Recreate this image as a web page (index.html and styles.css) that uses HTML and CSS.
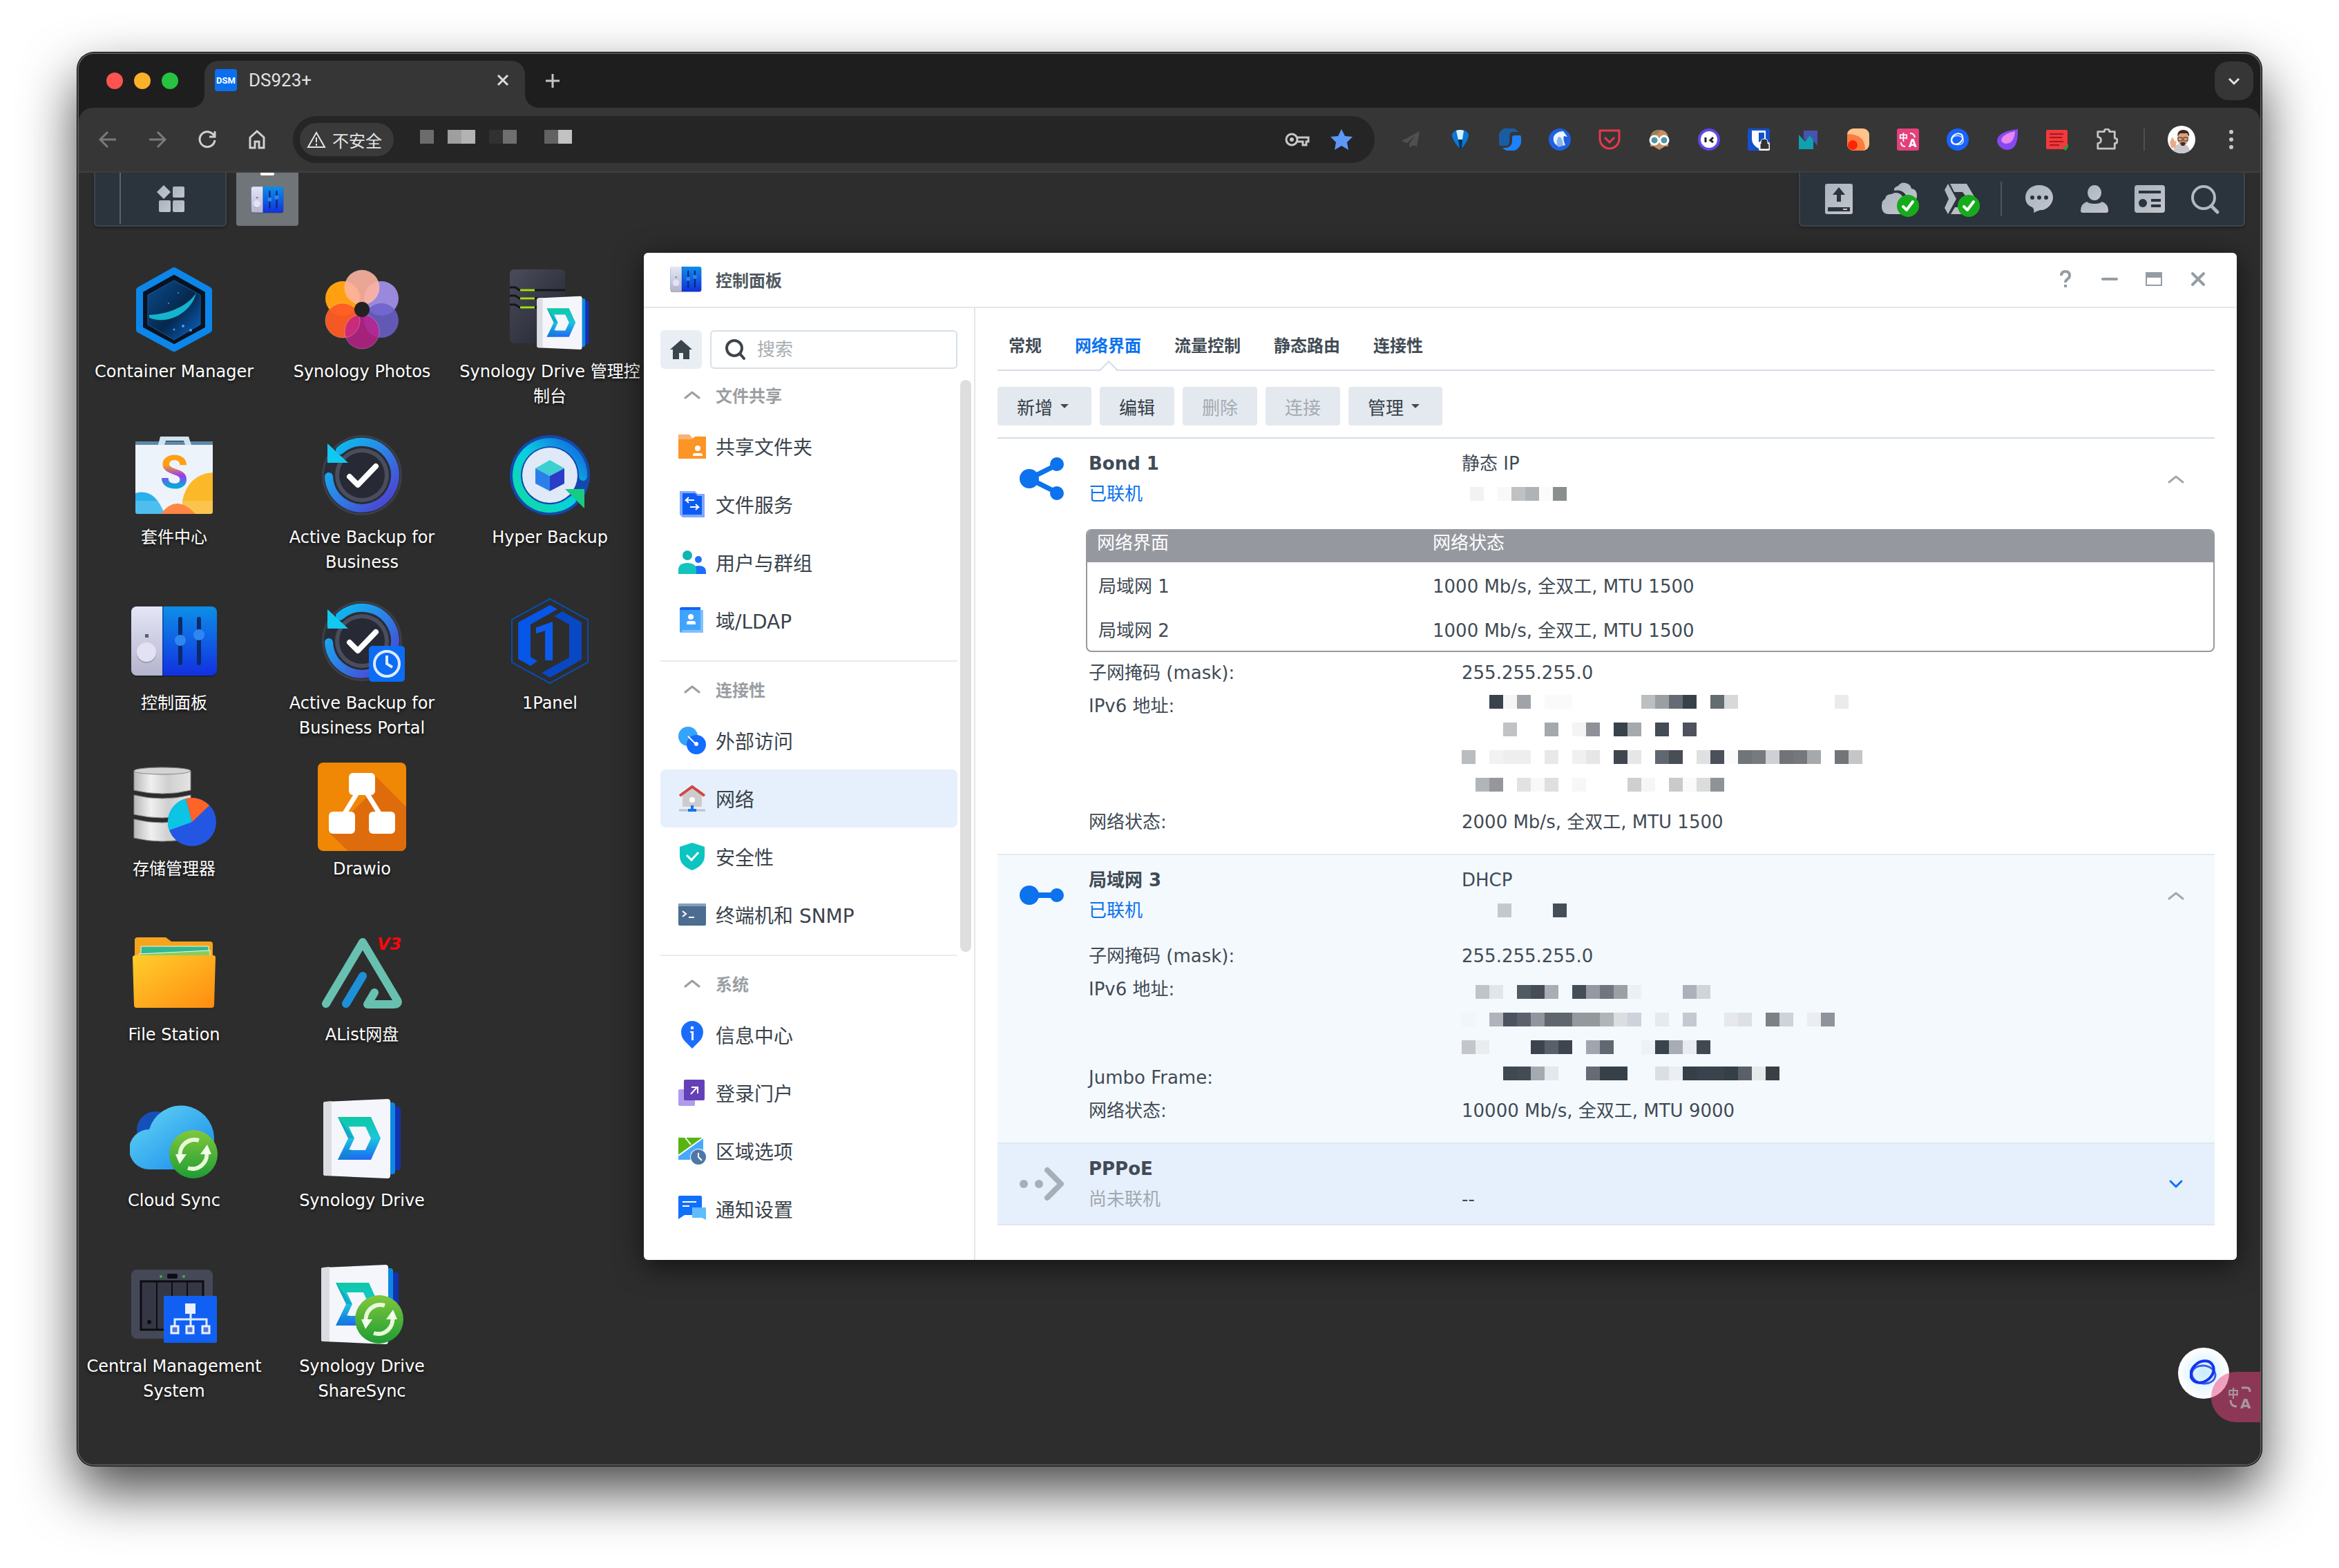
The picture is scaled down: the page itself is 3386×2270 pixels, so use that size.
FILE: index.html
```html
<!DOCTYPE html>
<html lang="zh-CN">
<head>
    <meta charset="UTF-8">
    <meta name="viewport" content="width=device-width, initial-scale=1.0">
    <title>DS923+</title>
    <link rel="stylesheet" href="styles.css">
</head>
<body>
    <!-- Shared gradients and icons -->
    <svg class="defs" aria-hidden="true">
        <defs>
            <linearGradient id="gBlue" x1="0" y1="0" x2="0" y2="1"><stop offset="0" stop-color="#0c8fe8"/><stop offset="1" stop-color="#1230e0"/></linearGradient>
            <linearGradient id="gSilver" x1="0" y1="0" x2="0" y2="1"><stop offset="0" stop-color="#e6e6f8"/><stop offset="1" stop-color="#b4b4cc"/></linearGradient>
            <linearGradient id="gRing" x1="0" y1="0" x2="1" y2="1"><stop offset="0" stop-color="#06c6ee"/><stop offset=".45" stop-color="#2a86e8"/><stop offset="1" stop-color="#5138cc"/></linearGradient>
            <linearGradient id="gRing2" x1="0" y1="1" x2="1" y2="0"><stop offset="0" stop-color="#10dca0"/><stop offset=".5" stop-color="#08cfe0"/><stop offset="1" stop-color="#1260e0"/></linearGradient>
            <linearGradient id="gDrive" x1="0" y1="0" x2="0" y2="1"><stop offset="0" stop-color="#0cc9a4"/><stop offset=".5" stop-color="#1cc4dc"/><stop offset="1" stop-color="#1c68f4"/></linearGradient>
            <linearGradient id="gDark" x1="0" y1="0" x2="1" y2="1"><stop offset="0" stop-color="#4a4c5c"/><stop offset="1" stop-color="#22242e"/></linearGradient>
            <linearGradient id="gMetal" x1="0" y1="0" x2="1" y2="0"><stop offset="0" stop-color="#b8b8b8"/><stop offset=".3" stop-color="#f0f0f0"/><stop offset=".6" stop-color="#cfcfcf"/><stop offset="1" stop-color="#e4e4e4"/></linearGradient>
            <linearGradient id="gFolder" x1="0" y1="0" x2="1" y2="1"><stop offset="0" stop-color="#ffce2c"/><stop offset="1" stop-color="#ff8c10"/></linearGradient>
            <linearGradient id="gCloud" x1="0" y1="0" x2="1" y2="1"><stop offset="0" stop-color="#66d8f4"/><stop offset="1" stop-color="#1488ec"/></linearGradient>
            <linearGradient id="gGreen" x1="0" y1="0" x2="0" y2="1"><stop offset="0" stop-color="#80c83c"/><stop offset="1" stop-color="#1e9c34"/></linearGradient>
            <linearGradient id="gS" x1="0" y1="0" x2="0" y2="1"><stop offset=".35" stop-color="#ffa010"/><stop offset=".55" stop-color="#9a3cf0"/><stop offset=".75" stop-color="#08a8d8"/></linearGradient>
            <linearGradient id="gPlanet" x1="0" y1="0" x2="1" y2="1"><stop offset="0" stop-color="#0a4c90"/><stop offset=".55" stop-color="#06284c"/><stop offset="1" stop-color="#0a68d0"/></linearGradient>
            <linearGradient id="gGrey" x1="0" y1="0" x2="1" y2="1"><stop offset="0" stop-color="#a9b3c0"/><stop offset="1" stop-color="#c3c5ca"/></linearGradient>
        </defs>

        <symbol id="i-panel" viewBox="0 0 128 128">
            <rect x="2" y="16" width="124" height="100" rx="8" fill="#16181c" opacity=".5"/>
            <rect x="2" y="14" width="124" height="100" rx="8" fill="url(#gBlue)"/>
            <path d="M10 14h37v100H10a8 8 0 0 1-8-8V22a8 8 0 0 1 8-8z" fill="url(#gSilver)"/>
            <path d="M48 14v100" stroke="#10308c" stroke-width="1"/>
            <circle cx="24" cy="82" r="14" fill="#9c9cb4"/><circle cx="24" cy="80" r="14" fill="#e2e2f4"/>
            <rect x="22" y="54" width="5" height="5" fill="#5c5c6c"/>
            <path d="M73 32v64M100 32v64" stroke="#0a2a6c" stroke-width="6" stroke-linecap="round"/>
            <circle cx="73" cy="63" r="8" fill="#2f86f0"/><circle cx="100" cy="55" r="8" fill="#2f86f0"/>
        </symbol>

        <symbol id="i-container" viewBox="0 0 128 128">
            <path d="M64 8l50 28v57L64 120 14 93V36z" fill="#0a1220" stroke="#0c86e8" stroke-width="10" stroke-linejoin="round"/>
            <path d="M64 22l38 21v43L64 108 26 86V43z" fill="url(#gPlanet)" stroke="#1a5a9c" stroke-width="1"/>
            <path d="M28 76C58 88 90 66 96 40c-10 16-34 30-68 32z" fill="#14b4cc"/>
            <g fill="#3aa4ff"><circle cx="77" cy="88" r="2"/><circle cx="64" cy="93" r="1.5"/><circle cx="88" cy="94" r="2"/><circle cx="56" cy="55" r="1"/><circle cx="70" cy="40" r="1"/></g>
        </symbol>

        <symbol id="i-photos" viewBox="0 0 128 128">
            <circle cx="36" cy="48" r="25" fill="#ffa010"/><circle cx="36" cy="80" r="25" fill="#ff5c24" opacity=".95"/>
            <circle cx="92" cy="48" r="25" fill="#9a88dc"/><circle cx="92" cy="80" r="25" fill="#6c62cc" opacity=".85"/>
            <circle cx="64" cy="96" r="25" fill="#c0208c" opacity=".82"/><circle cx="64" cy="32" r="25" fill="#ffb4a0" opacity=".9"/>
            <g fill="none" stroke="#fff" stroke-opacity=".25"><circle cx="36" cy="80" r="25"/><circle cx="64" cy="32" r="25"/><circle cx="64" cy="96" r="25"/></g>
            <circle cx="64" cy="64" r="11" fill="#222"/>
        </symbol>

        <symbol id="i-book" viewBox="0 0 128 128">
            <path d="M90 18h26a4 4 0 0 1 4 4v84a4 4 0 0 1-4 4H90z" fill="#1232b0"/>
            <path d="M90 12h18a4 4 0 0 1 4 4v96a4 4 0 0 1-4 4H90z" fill="#0c88e4"/>
            <path d="M11 11l90-4q4 0 4 4v107q0 4-4 4l-90-4q-3 0-3-3V14q0-3 3-3z" fill="#f5f6fb"/>
            <path d="M11 11l9-1v108l-9-0q-3 0-3-3V14q0-3 3-3z" fill="#dcdde2"/>
            <path d="M29 33h48l14 31-14 31H29l15-31zM45 47l8 17-8 17h24l8-17-8-17z" fill="url(#gDrive)" fill-rule="evenodd"/>
            <path d="M29 33l24 31-9 0zM29 95l10-15h10l-4 15z" fill="#0a8cc0" opacity=".45"/>
        </symbol>

        <symbol id="i-sync" viewBox="0 0 72 72">
            <circle cx="36" cy="36" r="35" fill="url(#gGreen)"/>
            <path d="M28 56a21 21 0 0 0 27-24M44 16a21 21 0 0 0-27 24" fill="none" stroke="#e8f8d8" stroke-width="6"/>
            <path d="M62 36H46l10-14zM10 36h16L16 50z" fill="#f4fdec"/>
        </symbol>

        <symbol id="i-drive-admin" viewBox="0 0 128 128">
            <rect x="6" y="6" width="80" height="107" rx="6" fill="url(#gDark)"/>
            <path d="M6 32h8l6 4h66M6 44h8l6 4h66M6 57h8l6 4h66" stroke="#14161c" stroke-width="3" fill="none"/>
            <path d="M21 36h21M21 48h21M21 61h21" stroke="#a4e014" stroke-width="3"/>
            <use href="#i-book" x="40" y="40" width="86" height="86"/>
        </symbol>

        <symbol id="i-package" viewBox="0 0 128 128">
            <path d="M8 15h112v10H8z" fill="#5c88a8"/>
            <path d="M41 20l3-12h41l4 12h-9l-2-6H52l-2 6z" fill="#d0e4f0"/>
            <path d="M8 20h112v96a4 4 0 0 1-4 4H12a4 4 0 0 1-4-4z" fill="#edf3fa"/>
            <path d="M8 90q28-8 42 30H12a4 4 0 0 1-4-4z" fill="#28b0ec"/>
            <path d="M76 101q8-38 44-41v56a4 4 0 0 1-4 4H76z" fill="#fbb828"/>
            <path d="M45 120q22-30 50 0z" fill="#ff6c1c"/>
            <path d="M8 101h112v15a4 4 0 0 1-4 4H12a4 4 0 0 1-4-4z" fill="#fff" opacity=".18"/>
        </symbol>

        <symbol id="i-abb" viewBox="0 0 128 128">
            <circle cx="64" cy="64" r="58" fill="#3c3f4a"/><circle cx="64" cy="64" r="55" fill="#292b36"/>
            <circle cx="64" cy="64" r="39" fill="#4a4d5c"/><circle cx="64" cy="64" r="33" fill="#272934"/>
            <path d="M16 66a48 48 0 1 0 16-38" fill="none" stroke="url(#gRing)" stroke-width="12" stroke-linecap="round"/>
            <path d="M14 18l30 28H14z" fill="#12c8f0"/>
            <path d="M46 66l12 12 26-27" fill="none" stroke="#fff" stroke-width="8" stroke-linecap="round" stroke-linejoin="round"/>
        </symbol>

        <symbol id="i-abb-portal" viewBox="0 0 128 128">
            <use href="#i-abb" width="128" height="128"/>
            <rect x="74" y="71" width="52" height="52" rx="5" fill="#0c6cf4"/>
            <circle cx="100" cy="97" r="18" fill="none" stroke="#dcebff" stroke-width="4"/>
            <path d="M100 85v12l8 5" fill="none" stroke="#dcebff" stroke-width="4"/>
        </symbol>

        <symbol id="i-hyper" viewBox="0 0 128 128">
            <circle cx="64" cy="64" r="58" fill="#1448ac"/>
            <circle cx="64" cy="64" r="40" fill="#dfe9f8"/>
            <path d="M96 100A48 48 0 1 1 112 66" fill="none" stroke="url(#gRing2)" stroke-width="12" stroke-linecap="round"/>
            <path d="M114 84v28L86 84z" fill="#16cc84"/>
            <path d="M64 42l21 12-21 11-21-11z" fill="#3cd0d0"/><path d="M43 54l21 11v22L43 76z" fill="#2a80e8"/><path d="M85 54L64 65v22l21-11z" fill="#2a3cc8"/>
        </symbol>

        <symbol id="i-onepanel" viewBox="0 0 128 128">
            <path d="M64 3l55 30v62l-55 30L9 95V33z" fill="none" stroke="#0a4cb0" stroke-width="2"/>
            <path d="M64 12l11 6-39 22v47l10 6-10 7-18-10V37z" fill="#0656e8"/>
            <path d="M82 21l28 16v54l-46 26-12-7 40-22V40L70 28z" fill="#0848c4"/>
        </symbol>

        <symbol id="i-storage" viewBox="0 0 128 128">
            <g stroke="#8a8a8a" stroke-width="1" fill="url(#gMetal)">
                <path d="M6 82q41 10 82 0v27q-41 10-82 0z"/><path d="M6 47q41 10 82 0v28q-41 10-82 0z"/><path d="M6 12q41 10 82 0v28q-41 10-82 0z"/>
                <ellipse cx="47" cy="12" rx="41" ry="5" fill="#d4d4d4"/>
            </g>
            <circle cx="90" cy="86" r="35" fill="#2456e4"/>
            <path d="M90 86L57 98A35 35 0 0 1 81 52z" fill="#0cc4e4"/><path d="M90 86L81 52a35 35 0 0 1 34 10z" fill="#ff6426"/>
        </symbol>

        <symbol id="i-drawio" viewBox="0 0 128 128">
            <rect width="128" height="128" rx="8" fill="#f08705"/>
            <path d="M82 18l46 46v56a8 8 0 0 1-8 8H44L18 103l60-60z" fill="#df6c0c"/>
            <path d="M57 44L36 78M71 44l21 34" stroke="#fff" stroke-width="7"/>
            <g fill="#fff"><rect x="45" y="15" width="38" height="32" rx="6"/><rect x="16" y="71" width="38" height="32" rx="6"/><rect x="74" y="71" width="38" height="32" rx="6"/></g>
        </symbol>

        <symbol id="i-files" viewBox="0 0 128 128">
            <path d="M7 17a4 4 0 0 1 4-4h41l8 6h56a4 4 0 0 1 4 4v30H7z" fill="#f6a41c"/>
            <path d="M16 26h98v20H16z" fill="#34b890" stroke="#e8fbe8" stroke-width="1"/><path d="M13 37l103-5v16H13z" fill="#88cc60" stroke="#e8fbe8" stroke-width="1"/>
            <path d="M4 42q0-3 4-3h112q4 0 4 3l-2 69q0 4-4 4H10q-4 0-4-4z" fill="url(#gFolder)"/>
        </symbol>

        <symbol id="i-alist" viewBox="0 0 128 128">
            <path d="M12 109L65 20l50 84q3 6-6 6H72l10-17" fill="none" stroke="#68c0b0" stroke-width="12" stroke-linecap="round" stroke-linejoin="round"/>
            <path d="M41 109l24-40" stroke="#1c90d8" stroke-width="12" stroke-linecap="round"/>
        </symbol>

        <symbol id="i-cloud" viewBox="0 0 128 128">
            <circle cx="37" cy="52" r="27" fill="#1450b8"/>
            <path d="M28 109a29 29 0 0 1 0-58A48 48 0 0 1 122 62q0 47-40 47z" fill="url(#gCloud)"/>
            <use href="#i-sync" x="56" y="51" width="72" height="72"/>
        </symbol>

        <symbol id="i-cms" viewBox="0 0 128 128">
            <rect x="2" y="14" width="118" height="100" rx="8" fill="#454856"/>
            <rect x="16" y="31" width="90" height="70" fill="#353844" stroke="#0c0d12" stroke-width="3"/>
            <path d="M39 31v70M61 31v70M83 31v70" stroke="#0c0d12" stroke-width="2"/>
            <rect x="54" y="20" width="15" height="7" rx="2" fill="#0c0d12"/><circle cx="45" cy="24" r="2" fill="#38b838"/><circle cx="78" cy="24" r="2" fill="#38b838"/><circle cx="28" cy="90" r="3" fill="#0c0d12"/>
            <rect x="49" y="52" width="77" height="68" rx="2" fill="#1060f4"/>
            <path d="M88 78v18M65 96V86h46v10" fill="none" stroke="#dcebff" stroke-width="3"/>
            <rect x="80" y="63" width="15" height="15" fill="#e8f2ff"/>
            <g fill="#5c74d8" stroke="#e8f2ff" stroke-width="3"><rect x="60" y="96" width="10" height="10"/><rect x="82" y="96" width="10" height="10"/><rect x="105" y="96" width="10" height="10"/></g>
        </symbol>

        <symbol id="i-sharesync" viewBox="0 0 128 128">
            <use href="#i-book" x="-3" width="128" height="128"/>
            <use href="#i-sync" x="53" y="50" width="72" height="72"/>
        </symbol>

        <symbol id="i-up" viewBox="0 0 24 24"><path d="M2 17l10-8 10 8" fill="none" stroke="currentColor" stroke-width="3" stroke-linecap="round" stroke-linejoin="round"/></symbol>
        <symbol id="i-down" viewBox="0 0 24 24"><path d="M4 8l8 8 8-8" fill="none" stroke="currentColor" stroke-width="3" stroke-linecap="round" stroke-linejoin="round"/></symbol>
        <symbol id="i-okay" viewBox="0 0 32 32"><circle cx="16" cy="16" r="16" fill="#17ab1c"/><path d="M9 17l5 5 9-12" fill="none" stroke="#fff" stroke-width="4" stroke-linecap="round" stroke-linejoin="round"/></symbol>
        <symbol id="i-orbit" viewBox="0 0 40 40"><ellipse cx="20" cy="22" rx="17" ry="13" fill="none" stroke="currentColor" stroke-width="3" opacity=".8" transform="rotate(8 20 22)"/><ellipse cx="18" cy="18" rx="18" ry="14" transform="rotate(-38 18 18)" fill="none" stroke="currentColor" stroke-width="4"/></symbol>
    </svg>

    <div class="browser">
        <div class="tab-strip">
            <div class="lights"><i class="red"></i><i class="yellow"></i><i class="green"></i></div>
            <div class="tab">
                <svg class="ico32" viewBox="0 0 32 32"><rect width="32" height="32" rx="4" fill="#0a70f0"/><text x="16" y="21" text-anchor="middle" font-size="13" font-weight="700" fill="#fff" font-family="Roboto">DSM</text></svg>
                <span class="tab-title">DS923+</span>
                <button class="plain" aria-label="关闭标签页"><svg class="ico24" viewBox="0 0 24 24"><path d="M5 5l14 14M19 5L5 19" stroke="#dcdcdc" stroke-width="3"/></svg></button>
            </div>
            <button class="plain new-tab" aria-label="新标签页"><svg class="ico24" viewBox="0 0 24 24"><path d="M12 2v20M2 12h20" stroke="#c4c4c4" stroke-width="3"/></svg></button>
            <button class="plain tab-search" aria-label="搜索标签页"><svg class="ico24" viewBox="0 0 24 24"><path d="M5 9l7 7 7-7" fill="none" stroke="#e4e4e4" stroke-width="3"/></svg></button>
        </div>

        <div class="toolbar">
            <button class="plain nav dim" aria-label="后退"><svg class="ico32" viewBox="0 0 32 32"><path d="M28 16H6M16 5L5 16l11 11"/></svg></button>
            <button class="plain nav dim" aria-label="前进"><svg class="ico32" viewBox="0 0 32 32"><path d="M4 16h22M16 5l11 11-11 11"/></svg></button>
            <button class="plain nav" aria-label="重新加载"><svg class="ico32" viewBox="0 0 32 32"><path d="M27 17a11 11 0 1 1-3-9l3 3M27 4v8h-8"/></svg></button>
            <button class="plain nav" aria-label="主页"><svg class="ico32" viewBox="0 0 32 32"><path d="M6 13L16 4l10 9v15h-7v-9h-6v9H6z"/></svg></button>
            <div class="address">
                <button class="plain chip"><svg class="ico28" viewBox="0 0 28 28"><path d="M14 4l12 21H2zM14 11v7M14 20v3" fill="none" stroke="#e4e4e4" stroke-width="2"/></svg>不安全</button>
                <svg class="mosaic url" data-rows="5:6c6c6c 7:9f9f9f 8:b3b3b3 10:313131 11:6f6f6f 14:626262 15:c2c2c2"></svg>
                <svg class="key" viewBox="0 0 36 32"><path d="M16 13h18v6h-3v5h-5v-5H16" fill="none" stroke="#c8c8c8" stroke-width="3"/><circle cx="10" cy="16" r="8" fill="none" stroke="#c8c8c8" stroke-width="3"/><circle cx="10" cy="16" r="3" fill="#c8c8c8"/></svg>
                <svg class="ico32" viewBox="0 0 32 32"><path d="M16 1l5 10 11 1-8 8 2 11-10-6-10 6 2-11-8-8 11-1z" fill="#5e97f8"/></svg>
            </div>
            <div class="extensions">
                <svg class="ico32" viewBox="0 0 32 32"><path d="M29 4L3 18l8 3 12-11-9 12 1 6 4-4 6 2z" fill="#505050"/></svg>
                <svg class="ico32" viewBox="0 0 32 32"><path d="M4 10Q5 2 16 2t12 8q0 6-9 18h-5Q4 16 4 10z" fill="#0a78d8"/><path d="M10 3q6-2 11 0l-2 13h-6z" fill="#d4f0ff"/><path d="M13 16h6l-1 13h-3z" fill="#04305c"/></svg>
                <svg class="ico32" viewBox="0 0 32 32"><path d="M28 5A16 16 0 0 0 0 20q0 4 1 5h10q4-1 4-6v-8q0-6 6-6z" fill="#1a5ca4"/><path d="M31 10A16 16 0 0 1 5 28h6q8-2 8-10v-5q0-3 4-3z" fill="#1c80ff"/></svg>
                <svg class="ico32" viewBox="0 0 32 32"><circle cx="16" cy="16" r="16" fill="#2060e0"/><path d="M7 12q4-8 14-8l6 8-5-1q-2 4 2 13l-9 2Q5 22 7 12z" fill="#e8f4ff"/><path d="M14 12q6-1 7 13l-7 2q-5-7 0-15z" fill="#8cb4e8"/></svg>
                <svg class="ico32" viewBox="0 0 32 32"><path d="M2 3h28v12a14 14 0 0 1-28 0z" fill="none" stroke="#e8384c" stroke-width="3" stroke-linejoin="round"/><path d="M9 13l7 7 7-7" fill="none" stroke="#e8384c" stroke-width="3"/></svg>
                <svg class="ico32" viewBox="0 0 32 32"><path d="M3 14Q4 2 16 2t13 12v12h-5L16 31 8 26H3z" fill="#c49068"/><path d="M3 14Q4 2 18 2 14 10 3 14z" fill="#988058"/><circle cx="9" cy="17" r="6" fill="#4c98a8" stroke="#fff" stroke-width="3"/><circle cx="23" cy="17" r="6" fill="#4c98a8" stroke="#fff" stroke-width="3"/></svg>
                <svg class="ico32" viewBox="0 0 32 32"><circle cx="16" cy="16" r="16" fill="#6048e4"/><circle cx="16" cy="16" r="12" fill="#fff"/><path d="M11 13v7M22 13l-4 4 4 3" fill="none" stroke="#222" stroke-width="3"/></svg>
                <svg class="ico32" viewBox="0 0 32 32"><rect width="32" height="32" rx="2" fill="#1450cc"/><path d="M6 3h20v12q0 10-10 14Q6 24 6 15z" fill="#fff"/><path d="M16 6h8v10l-8 4z" fill="#1450cc"/><rect x="16" y="20" width="16" height="12" rx="2" fill="#fff"/><path d="M19 22v-2q0-5 5-5t5 5v2h2v8H18v-8z" fill="#333" stroke="#fff" stroke-width="1"/></svg>
                <svg class="ico32" viewBox="0 0 32 32"><path d="M9 3h20v22l-6-7-5 4-9-7z" fill="#4454b0"/><path d="M2 9l9 10 7-9 5 7v13H2z" fill="#10a0b0"/></svg>
                <svg class="ico32" viewBox="0 0 32 32"><rect width="32" height="32" rx="9" fill="#ffc48c"/><path d="M0 8q26 0 26 22l-4 2H9a9 9 0 0 1-9-9z" fill="#ff7c40"/><circle cx="8" cy="24" r="7" fill="#ff2408"/></svg>
                <svg class="ico32" viewBox="0 0 32 32"><rect width="32" height="32" rx="3" fill="#e4407c"/><text x="3" y="17" font-size="13" fill="#fff" font-weight="700">中</text><text x="17" y="27" font-size="15" fill="#fff" font-weight="700">A</text><path d="M19 7q6 0 7 6M6 20q0 6 6 6" fill="none" stroke="#fff" stroke-width="2"/></svg>
                <svg class="ico32 on-blue" viewBox="0 0 32 32"><circle cx="16" cy="16" r="16" fill="#1864fc"/><use href="#i-orbit" x="6" y="6" width="20" height="20"/></svg>
                <svg class="ico32" viewBox="0 0 32 32"><path d="M31 1Q32 31 16 31A15 15 0 0 1 1 18Q2 4 31 1z" fill="#8848f0"/><path d="M27 4Q26 22 13 22 5 20 8 14q4-7 19-10z" fill="#e888f0"/></svg>
                <svg class="ico32" viewBox="0 0 32 32"><rect y="2" width="31" height="28" rx="2" fill="#f4383c"/><path d="M5 8h20M5 13h18M5 19h20M5 24h14" stroke="#9c1c20" stroke-width="2"/><path d="M25 27l3 3 5-7" fill="none" stroke="#20a040" stroke-width="3"/></svg>
                <svg class="ico32" viewBox="0 0 32 32"><path d="M2 4h10q0-4 4-4t4 4h8v10q4 0 4 4t-4 4v8H2V22q5-1 5-5t-5-5z" transform="scale(.94) translate(1 1)" fill="none" stroke="#c4c4c4" stroke-width="3" stroke-linejoin="round"/></svg>
            </div>
            <div class="profile">
                <svg class="avatar" viewBox="0 0 40 40"><circle cx="20" cy="20" r="20" fill="#fff"/><path d="M8 36q2-10 12-10t12 10q-5 4-12 4T8 36z" fill="#c8c8cc"/><ellipse cx="22" cy="18" rx="8" ry="11" fill="#dca07c"/><path d="M14 15q0-9 9-9t8 10l-3-5H18z" fill="#3c2820"/><path d="M15 17h6v5h-6zM23 17h6v5h-6z" fill="none" stroke="#333" stroke-width="1"/><path d="M18 25q4-3 8 0l-2 4h-4z" fill="#442c20"/><path d="M3 24l4-8 3 6 3 1-2 9H5z" fill="#e8ac88"/></svg>
                <svg class="ico32" viewBox="0 0 32 32"><g fill="#c8c8c8"><circle cx="16" cy="5" r="3"/><circle cx="16" cy="16" r="3"/><circle cx="16" cy="27" r="3"/></g></svg>
            </div>
        </div>

        <div class="desktop">
            <div class="taskbar">
                <button class="main-menu" aria-label="主菜单"><svg viewBox="0 0 40 40"><g fill="url(#gGrey)"><path d="M9 0l10 10-10 10L-1 10z"/><rect x="22" y="2" width="17" height="16" rx="2"/><rect x="2" y="22" width="17" height="17" rx="2"/><rect x="22" y="22" width="17" height="17" rx="2"/></g></svg></button>
                <button class="running" aria-label="控制面板"><svg viewBox="0 0 128 128"><use href="#i-panel"/></svg></button>
                <div class="tray">
                    <svg viewBox="0 0 48 52"><path d="M4 7q0-3 3-3h34q3 0 3 3v38q0 3-3 3H7q-3 0-3-3z" fill="url(#gGrey)"/><path d="M21 30V20h-6l9-11 9 11h-6v10z" fill="#2b333c"/><path d="M8 38h32v6H8z" fill="#2b333c"/><path d="M30 40h6v2h-6z" fill="#c3c5ca"/></svg>
                    <svg viewBox="0 0 56 52"><path d="M20 14q-1-5 6-7 4-6 11-4t8 8q8 1 8 10t-8 10l-9-12q-6-7-16-5z" fill="url(#gGrey)"/><path d="M12 48q-10 0-10-12 0-8 5-10 1-7 9-7 7-4 13 0 5 4 6 11l2 18z" fill="url(#gGrey)"/><use href="#i-okay" x="24" y="20" width="32" height="32"/></svg>
                    <svg viewBox="0 0 56 52"><path d="M10 4l12 22-12 22-5-9 6-13-6-13zM13 4h24l13 22-5 8-14-18H19zM20 38h18v10H14z" fill="url(#gGrey)"/><use href="#i-okay" x="24" y="20" width="32" height="32"/></svg>
                    <span class="tray-split"></span>
                    <svg viewBox="0 0 48 48"><path d="M24 4c12 0 20 8 20 18S34 40 28 40c-4 0-8 2-12 4 1-4 0-6-2-8C8 34 4 29 4 22 4 12 12 4 24 4z" fill="url(#gGrey)"/><g fill="#2b333c"><circle cx="14" cy="22" r="3"/><circle cx="24" cy="22" r="3"/><circle cx="34" cy="22" r="3"/></g></svg>
                    <svg viewBox="0 0 48 48"><ellipse cx="24" cy="15" rx="10" ry="11" fill="url(#gGrey)"/><path d="M4 41q0-10 9-13 3 3 11 3t11-3q9 3 9 13 0 3-3 3H7q-3 0-3-3z" fill="url(#gGrey)"/></svg>
                    <svg viewBox="0 0 48 48"><rect x="2" y="4" width="44" height="40" rx="4" fill="url(#gGrey)"/><g fill="#2b333c"><path d="M8 12h32v4H8z"/><circle cx="14" cy="30" r="6"/><path d="M26 24h14v4H26zM26 32h14v4H26z"/></g></svg>
                    <svg viewBox="0 0 48 48"><circle cx="22" cy="22" r="16" fill="none" stroke="#b0b8c2" stroke-width="4"/><path d="M33 34l9 9" stroke="#b0b8c2" stroke-width="5" stroke-linecap="round"/></svg>
                </div>
            </div>

            <div class="apps">
                <a href="#" class="app"><svg><use href="#i-container"/></svg><span>Container Manager</span></a>
                <a href="#" class="app"><svg><use href="#i-package"/><text x="64" y="83" text-anchor="middle" font-size="66" font-weight="700" fill="url(#gS)" font-family="Roboto">S</text></svg><span>套件中心</span></a>
                <a href="#" class="app"><svg><use href="#i-panel"/></svg><span>控制面板</span></a>
                <a href="#" class="app"><svg><use href="#i-storage"/></svg><span>存储管理器</span></a>
                <a href="#" class="app"><svg><use href="#i-files"/></svg><span>File Station</span></a>
                <a href="#" class="app"><svg><use href="#i-cloud"/></svg><span>Cloud Sync</span></a>
                <a href="#" class="app"><svg><use href="#i-cms"/></svg><span>Central Management System</span></a>
                <a href="#" class="app"><svg><use href="#i-photos"/></svg><span>Synology Photos</span></a>
                <a href="#" class="app"><svg><use href="#i-abb"/></svg><span>Active Backup for Business</span></a>
                <a href="#" class="app"><svg><use href="#i-abb-portal"/></svg><span>Active Backup for Business Portal</span></a>
                <a href="#" class="app"><svg><use href="#i-drawio"/></svg><span>Drawio</span></a>
                <a href="#" class="app"><svg><use href="#i-alist"/><text x="86" y="31" font-size="24" font-weight="700" font-style="italic" fill="#f8080c">V3</text></svg><span>AList网盘</span></a>
                <a href="#" class="app"><svg><use href="#i-book"/></svg><span>Synology Drive</span></a>
                <a href="#" class="app"><svg><use href="#i-sharesync"/></svg><span>Synology Drive ShareSync</span></a>
                <a href="#" class="app"><svg><use href="#i-drive-admin"/></svg><span>Synology Drive 管理控制台</span></a>
                <a href="#" class="app"><svg><use href="#i-hyper"/></svg><span>Hyper Backup</span></a>
                <a href="#" class="app"><svg><use href="#i-onepanel"/><text x="60" y="92" text-anchor="middle" font-size="78" font-weight="700" fill="#0a5cf0" font-family="Roboto">1</text></svg><span>1Panel</span></a>
            </div>

            <div class="window">
                <div class="window-header">
                    <svg class="window-icon" viewBox="0 0 128 128"><use href="#i-panel"/></svg>
                    <h1>控制面板</h1>
                    <div class="window-tools">
                        <button class="plain" aria-label="帮助"><svg class="ico28" viewBox="0 0 28 28"><path d="M8 9q0-6 6-6t6 6q0 3-3 5t-3 5" fill="none" stroke="#949da3" stroke-width="4"/><rect x="12" y="22" width="4" height="4" fill="#949da3"/></svg></button>
                        <button class="plain" aria-label="最小化"><svg class="ico28" viewBox="0 0 28 28"><path d="M4 14h20" stroke="#949da3" stroke-width="4" stroke-linecap="round"/></svg></button>
                        <button class="plain" aria-label="最大化"><svg class="ico28" viewBox="0 0 28 28"><rect x="3" y="5" width="22" height="18" fill="none" stroke="#949da3" stroke-width="2"/><path d="M2 4h24v8H2z" fill="#949da3"/></svg></button>
                        <button class="plain" aria-label="关闭"><svg class="ico28" viewBox="0 0 28 28"><path d="M6 6l16 16M22 6L6 22" stroke="#949da3" stroke-width="4" stroke-linecap="round"/></svg></button>
                    </div>
                </div>

                <div class="window-body">
                    <div class="sidebar">
                        <div class="search-row">
                            <button class="home" aria-label="首页"><svg class="ico32" viewBox="0 0 32 32"><path d="M16 2L0 16h4v14h9v-9h6v9h9V16h4z" fill="#3c444c"/></svg></button>
                            <div class="search">
                                <svg class="ico32" viewBox="0 0 32 32"><circle cx="15" cy="14" r="11" fill="none" stroke="#3c444c" stroke-width="4"/><path d="M23 22l6 7" stroke="#3c444c" stroke-width="4" stroke-linecap="round"/></svg>
                                <input type="text" placeholder="搜索" aria-label="搜索">
                            </div>
                        </div>
                        <div class="nav-list">
                            <div class="nav-group">
                                <h2><svg class="ico24"><use href="#i-up"/></svg>文件共享</h2>
                                <a href="#"><svg viewBox="0 0 40 40"><path d="M0 3h16l4 5h20v30H0z" fill="#fbb074"/><path d="M0 10h20l4-4h16v32H0z" fill="#fc9426"/><circle cx="28" cy="23" r="4" fill="#fff"/><path d="M21 34v-1q0-3 3-3h8q3 0 3 3v1z" fill="#fff"/></svg>共享文件夹</a>
                                <a href="#"><svg viewBox="0 0 40 40"><path d="M2 1h22l4 4h10v34H6l-4-4z" fill="#80a8fc"/><path d="M6 4h18l4 4h6v27H6z" fill="#0c5cf4"/><path d="M23 14H11l4-4M11 14l4 4M17 24h12l-4-4M29 24l-4 4" fill="none" stroke="#fff" stroke-width="2"/></svg>文件服务</a>
                                <a href="#"><svg viewBox="0 0 40 40"><circle cx="29" cy="16" r="5" fill="#1c70fc"/><path d="M20 37V28q4-3 9-3 11 0 11 9v3z" fill="#1c70fc"/><circle cx="13" cy="10" r="7" fill="#10b4b0"/><path d="M0 37v-6q0-10 13-10t13 10v6z" fill="#14c4bc"/></svg>用户与群组</a>
                                <a href="#"><svg viewBox="0 0 40 40"><path d="M2 4q0-3 3-3h27v10H2z" fill="#1064f8"/><path d="M2 5h32v33H5q-3 0-3-3z" fill="#40a4fc"/><path d="M32 5h4v33H5v-4h27z" fill="#80c0fc"/><circle cx="18" cy="15" r="4" fill="#fff"/><path d="M12 26v-2q0-3 3-3h7q3 0 3 3v2z" fill="#fff"/></svg>域/LDAP</a>
                            </div>
                            <div class="nav-group">
                                <h2><svg class="ico24"><use href="#i-up"/></svg>连接性</h2>
                                <a href="#"><svg viewBox="0 0 40 40"><circle cx="14" cy="14" r="14" fill="#34a4fc"/><circle cx="26" cy="26" r="14" fill="#146cfc"/><path d="M14 14l12 12" stroke="#fff" stroke-width="2"/><circle cx="26" cy="25" r="3" fill="#fff"/></svg>外部访问</a>
                                <a href="#" class="active"><svg viewBox="0 0 40 40"><path d="M20 5l14 10v17H6V15z" fill="#ccccce"/><path d="M2 16L20 3l18 13" fill="none" stroke="#d44440" stroke-width="4"/><circle cx="20" cy="22" r="4" fill="#fff"/><path d="M1 37h38" stroke="#b8c0cc" stroke-width="3"/><path d="M14 35h4v-5h4v5h4v4H14z" fill="#1870f0"/></svg>网络</a>
                                <a href="#"><svg viewBox="0 0 40 40"><path d="M20 0l18 6v13q0 14-18 21Q2 33 2 19V6z" fill="#0cc4c0"/><path d="M12 18l7 7 10-11" fill="none" stroke="#fff" stroke-width="3"/></svg>安全性</a>
                                <a href="#"><svg viewBox="0 0 40 40"><rect y="4" width="40" height="32" rx="2" fill="#4c6c90"/><path d="M0 4h40v4H0z" fill="#84a0bc"/><path d="M6 15l5 4-5 4M15 24h8" fill="none" stroke="#fff" stroke-width="2"/></svg>终端机和 SNMP</a>
                            </div>
                            <div class="nav-group">
                                <h2><svg class="ico24"><use href="#i-up"/></svg>系统</h2>
                                <a href="#"><svg viewBox="0 0 40 40"><path d="M20 40L10 30Q4 24 4 16a16 16 0 0 1 32 0q0 8-6 14z" fill="#1c6cfc"/><path d="M18 8h4v4h-4zM17 15h5v13h-3V17h-2z" fill="#fff"/></svg>信息中心</a>
                                <a href="#"><svg viewBox="0 0 40 40"><rect y="15" width="24" height="24" rx="2" fill="#b09cec"/><rect x="8" y="1" width="30" height="30" rx="2" fill="#6440b8"/><path d="M18 22l9-10M19 12h9v9" fill="none" stroke="#fff" stroke-width="2"/></svg>登录门户</a>
                                <a href="#"><svg viewBox="0 0 40 40"><path d="M0 1h36L0 27z" fill="#58b414"/><path d="M36 1v32H0v-6z" fill="#48a8fc"/><path d="M10 1l8 10M0 27L36 1" stroke="#fff" stroke-width="2"/><circle cx="29" cy="29" r="12" fill="#fff"/><circle cx="29" cy="29" r="11" fill="#5078a4"/><path d="M29 23v6l5 5" fill="none" stroke="#fff" stroke-width="2"/></svg>区域选项</a>
                                <a href="#"><svg viewBox="0 0 40 40"><path d="M2 1h30q2 0 2 2v26H9l-9 6V3q0-2 2-2z" fill="#1070fc"/><path d="M20 18h20v18l-6-3H20z" fill="#60bcfc"/><path d="M6 10h20M6 16h10" stroke="#fff" stroke-width="2"/></svg>通知设置</a>
                            </div>
                            <span class="scrollbar"></span>
                        </div>
                    </div>

                    <div class="content">
                        <nav class="tabs">
                            <a href="#">常规</a>
                            <a href="#" class="active">网络界面</a>
                            <a href="#">流量控制</a>
                            <a href="#">静态路由</a>
                            <a href="#">连接性</a>
                        </nav>
                        <div class="actions">
                            <button class="menu">新增</button>
                            <button>编辑</button>
                            <button disabled>删除</button>
                            <button disabled>连接</button>
                            <button class="menu">管理</button>
                        </div>

                        <section class="iface">
                            <div class="iface-head">
                                <svg class="iface-icon" viewBox="0 0 64 64"><path d="M14 32L54 12M14 32l40 20" stroke="#0c72ee" stroke-width="7"/><g fill="#0c72ee"><circle cx="14" cy="32" r="14"/><circle cx="54" cy="11" r="10"/><circle cx="54" cy="53" r="10"/></g></svg>
                                <div class="iface-name"><h3>Bond 1</h3><p class="online">已联机</p></div>
                                <div class="iface-ip"><p>静态 IP</p><svg class="mosaic shift" data-rows="0:f2f2f2 2:f8f8f8 3:bfc1c3 4:b0b3b6 5:fbfbfb 6:8b8e8f"></svg></div>
                                <button class="plain toggle" aria-label="收起"><svg class="ico24"><use href="#i-up"/></svg></button>
                            </div>
                            <table>
                                <thead><tr><th>网络界面</th><th>网络状态</th></tr></thead>
                                <tbody>
                                    <tr><td>局域网 1</td><td>1000 Mb/s, 全双工, MTU 1500</td></tr>
                                    <tr><td>局域网 2</td><td>1000 Mb/s, 全双工, MTU 1500</td></tr>
                                </tbody>
                            </table>
                            <dl>
                                <dt>子网掩码 (mask):</dt><dd>255.255.255.0</dd>
                                <dt>IPv6 地址:</dt><dd><svg class="mosaic" data-rows="2:3a434b 3:f5f5f5 4:a0a3a7 6:fafafa 7:fafafa 13:bcbfc2 14:9b9fa2 15:656b74 16:374148 18:636c70 19:d6d8d9 27:eaebec / 3:bfc3c4 6:a4a8aa 8:f4f4f4 9:8e9197 11:38424a 12:a5a8ac 14:444c55 16:4d525c / 0:b9bdbf 2:f2f2f2 3:eeeeee 4:eeeeee 6:e8e8e8 8:f0f0f0 9:e6e6e6 11:3f464e 12:e6e6e6 14:5f6770 15:484e54 17:dfe0e1 18:4b505a 19:fafafa 20:717478 21:777a7e 22:cfd0d3 23:717377 24:75787d 25:a6a9ab 27:737679 28:c4c6c8 / 1:b2b5b7 2:95979b 4:e1e2e2 5:f8f8f8 6:dedfdf 8:f7f7f7 12:cecfd1 13:f5f6f8 15:c8cacc 16:fafafa 17:dbdcdd 18:909395"></svg></dd>
                                <dt>网络状态:</dt><dd>2000 Mb/s, 全双工, MTU 1500</dd>
                            </dl>
                        </section>

                        <section class="iface light">
                            <div class="iface-head">
                                <svg class="iface-icon" viewBox="0 0 64 64"><path d="M14 32h40" stroke="#0c72ee" stroke-width="8"/><g fill="#0c72ee"><circle cx="14" cy="32" r="14"/><circle cx="54" cy="32" r="10"/></g></svg>
                                <div class="iface-name"><h3>局域网 3</h3><p class="online">已联机</p></div>
                                <div class="iface-ip"><p>DHCP</p><svg class="mosaic shift" data-rows="2:c4c8cc 6:454d56"></svg></div>
                                <button class="plain toggle" aria-label="收起"><svg class="ico24"><use href="#i-up"/></svg></button>
                            </div>
                            <dl>
                                <dt>子网掩码 (mask):</dt><dd>255.255.255.0</dd>
                                <dt>IPv6 地址:</dt><dd class="low"><svg class="mosaic" data-rows="1:c0c4c8 2:e3e6e8 4:525a63 5:454d56 6:a9adb5 8:454d57 9:9499a0 10:6f7680 11:9ba0a5 12:edf0f2 16:adb1b9 17:d1d5da / 0:f2f5fb 2:b0b3bb 3:4c535e 4:5c626d 5:91959d 6:5f666c 7:5f666d 8:94989f 9:94999c 10:b0b5b8 11:dadee1 12:cfd2da 14:e6e9ef 16:c4c8d0 19:e6e8ee 20:dde1e4 22:7d8186 23:ced2d9 25:eaeef1 26:8f949c / 0:c3c7ca 1:e9edef 5:3e444d 6:596069 7:3d454e 9:a1a5ae 10:626872 13:eef1f8 14:3a424c 15:a8acb4 16:e8ebf2 17:414851"></svg></dd>
                                <dt>Jumbo Frame:</dt><dd><svg class="mosaic" data-rows="3:40494f 4:434b55 5:a5aab1 6:e3e7ee 9:666c74 10:374047 11:364048 14:dbdfe5 15:ebeef2 16:353f47 17:39424d 18:3a434c 19:353f46 20:5a5f6a 21:e6eaed 22:373f47"></svg></dd>
                                <dt>网络状态:</dt><dd>10000 Mb/s, 全双工, MTU 9000</dd>
                            </dl>
                        </section>

                        <section class="iface selected">
                            <div class="iface-head">
                                <svg class="iface-icon" viewBox="0 0 64 64"><g fill="#a6aeb7"><circle cx="6" cy="32" r="6"/><circle cx="28" cy="32" r="6"/></g><path d="M40 12l20 20-20 20" fill="none" stroke="#a6aeb7" stroke-width="8" stroke-linecap="round" stroke-linejoin="round"/></svg>
                                <div class="iface-name"><h3>PPPoE</h3><p class="offline">尚未联机</p></div>
                                <div class="iface-ip"><p></p><p>--</p></div>
                                <button class="plain toggle" aria-label="展开"><svg class="ico24"><use href="#i-down"/></svg></button>
                            </div>
                        </section>
                    </div>
                </div>
            </div>

            <button class="float-ball" aria-label="助手"><svg viewBox="0 0 40 40"><use href="#i-orbit"/></svg></button>
            <button class="float-translate" aria-label="翻译"><svg viewBox="0 0 36 36"><text x="0" y="18" font-size="16" font-weight="700">中</text><text x="18" y="34" font-size="20" font-weight="700">A</text><path d="M20 4h8q4 0 4 6M4 22q0 9 9 9" fill="none" stroke="#a8989e" stroke-width="3"/></svg></button>
        </div>
    </div>

    <script>
        // Masked values are drawn as 20px blocks: "column:color ..." with rows split by "/"
        document.querySelectorAll('.mosaic').forEach(function(svg) {
            const rows = svg.dataset.rows.split('/');
            let html = '';
            rows.forEach(function(row, y) {
                row.trim().split(' ').forEach(function(cell) {
                    const parts = cell.split(':');
                    html += '<rect x="' + parts[0] * 20 + '" y="' + y * 40 + '" width="20" height="20" fill="#' + parts[1] + '"/>';
                });
            });
            svg.setAttribute('height', rows.length * 40 - 20);
            svg.innerHTML = html;
        });
    </script>
</body>
</html>
```
FILE: styles.css
```css
* {
    margin: 0;
    padding: 0;
    box-sizing: border-box;
}

body {
    min-height: 100vh;
    padding: 76px 112px 148px;
    background-color: #fff;
    color: #414b55;
    font-family: 'DejaVu Sans', 'Noto Sans CJK SC', sans-serif;
    font-size: 26px;
    display: flex;
}

a {
    color: inherit;
    text-decoration: none;
}

button,
input {
    font: inherit;
    color: inherit;
    border: none;
    background: none;
}

svg {
    display: block;
    flex-shrink: 0;
}

.defs {
    position: absolute;
    width: 0;
    height: 0;
}

.plain {
    display: flex;
    align-items: center;
    justify-content: center;
    cursor: pointer;
}

.ico24 {
    width: 24px;
    height: 24px;
}

.ico28 {
    width: 28px;
    height: 28px;
}

.ico32 {
    width: 32px;
    height: 32px;
}

/* Browser frame */
.browser {
    flex: 1;
    min-width: 0;
    display: flex;
    flex-direction: column;
    border: 2px solid #5a5a5a;
    border-radius: 24px;
    background-color: #1e1e1e;
    box-shadow: 0 0 0 1px #000, 0 36px 80px rgba(0, 0, 0, 0.72);
    overflow: hidden;
}

.tab-strip {
    display: flex;
    align-items: center;
    height: 78px;
    padding: 0 10px 0 40px;
}

.lights {
    display: flex;
    gap: 16px;
    width: 142px;
}

.lights i {
    width: 24px;
    height: 24px;
    border-radius: 50%;
}

.red {
    background-color: #ff5350;
}

.yellow {
    background-color: #fdb128;
}

.green {
    background-color: #27c23f;
}

.tab {
    position: relative;
    align-self: flex-end;
    display: flex;
    align-items: center;
    gap: 17px;
    width: 464px;
    height: 68px;
    padding: 0 20px 12px 15px;
    border-radius: 20px 20px 0 0;
    background-color: #363636;
    color: #e2e2e2;
    font-family: Roboto, sans-serif;
}

.tab::before,
.tab::after {
    content: "";
    position: absolute;
    bottom: 0;
    width: 20px;
    height: 20px;
}

.tab::before {
    right: 100%;
    background: radial-gradient(circle at 0 0, transparent 20px, #363636 20px);
}

.tab::after {
    left: 100%;
    background: radial-gradient(circle at 100% 0, transparent 20px, #363636 20px);
}

.tab-title {
    flex: 1;
}

.new-tab {
    margin-left: 28px;
}

.tab-search {
    width: 56px;
    height: 56px;
    margin-left: auto;
    border-radius: 20px;
    background-color: #363636;
}

.toolbar {
    display: flex;
    align-items: center;
    height: 94px;
    padding: 0 26px;
    border-radius: 20px 20px 0 0;
    border-bottom: 2px solid #3f3f3f;
    background-color: #363636;
}

.nav {
    width: 32px;
    margin-right: 40px;
}

.nav path {
    fill: none;
    stroke: #d0d0d0;
    stroke-width: 3px;
}

.nav.dim path {
    stroke: #7a7a7a;
}

.address {
    flex: 1;
    display: flex;
    align-items: center;
    gap: 30px;
    height: 68px;
    margin: 0 36px 0 -4px;
    padding: 0 32px 0 10px;
    border-radius: 34px;
    background-color: #252525;
}

.chip {
    justify-content: flex-start;
    gap: 9px;
    width: 136px;
    height: 48px;
    padding-left: 10px;
    border-radius: 24px;
    background-color: #3a3a3a;
    color: #e4e4e4;
    font-family: 'Noto Sans CJK SC', sans-serif;
    font-size: 24px;
}

.url {
    flex: 1;
    margin: 0 0 8px -92px;
}

.key {
    width: 36px;
    height: 32px;
}

.extensions {
    display: flex;
    gap: 40px;
    padding-right: 37px;
    border-right: 2px solid #505050;
}

.on-blue {
    color: #fff;
}

.profile {
    display: flex;
    align-items: center;
    gap: 36px;
    padding-left: 33px;
}

.avatar {
    width: 40px;
    height: 40px;
}

/* Desktop */
.desktop {
    position: relative;
    flex: 1;
    background-color: #2d2d2d;
}

.taskbar {
    display: flex;
    align-items: flex-start;
    gap: 14px;
    padding: 0 22px;
}

.main-menu,
.tray {
    height: 78px;
    border: 2px solid #3e454d;
    border-top: none;
    border-radius: 0 0 6px 6px;
    background-color: #2b333c;
    box-shadow: 0 2px 4px rgba(0, 0, 0, 0.3);
}

.main-menu {
    position: relative;
    display: flex;
    align-items: center;
    justify-content: flex-end;
    width: 192px;
    padding-right: 58px;
}

.main-menu::before {
    content: "";
    position: absolute;
    left: 35px;
    top: 0;
    width: 2px;
    height: 74px;
    background-color: #5a626b;
}

.main-menu svg {
    width: 40px;
    height: 40px;
    overflow: visible;
}

.running {
    position: relative;
    display: flex;
    align-items: center;
    justify-content: center;
    width: 90px;
    height: 77px;
    border-radius: 0 0 4px 4px;
    background-color: #70757a;
}

.running::before {
    content: "";
    position: absolute;
    top: 0;
    width: 20px;
    height: 4px;
    border-radius: 0 0 2px 2px;
    background-color: #fff;
}

.running svg {
    width: 48px;
    height: 48px;
}

.tray {
    display: flex;
    align-items: center;
    gap: 32px;
    margin-left: auto;
    padding: 0 32px;
}

.tray svg {
    width: 48px;
    height: 52px;
}

.tray svg:first-child {
    margin-right: 4px;
}

.tray svg:nth-of-type(2),
.tray svg:nth-of-type(3) {
    width: 56px;
}

.tray-split {
    width: 2px;
    height: 50px;
    margin: 0 -2px;
    background-color: #4c545d;
}

.apps {
    display: grid;
    grid-template-rows: repeat(7, 240px);
    grid-auto-columns: 272px;
    grid-auto-flow: column;
    padding: 56px 2px;
}

.app {
    display: flex;
    flex-direction: column;
    align-items: center;
    gap: 8px;
    color: #fff;
    font-size: 24px;
    line-height: 36px;
    text-align: center;
    text-shadow: 0 2px 4px rgba(0, 0, 0, 0.8);
}

.app svg {
    width: 128px;
    height: 128px;
    overflow: visible;
    text-shadow: none;
}

/* Control panel window */
.window {
    position: absolute;
    top: 116px;
    left: 818px;
    right: 34px;
    border-radius: 6px;
    background-color: #fff;
    box-shadow: 0 8px 40px rgba(0, 0, 0, 0.6);
}

.window-header {
    display: flex;
    align-items: center;
    height: 80px;
    padding: 0 42px 2px 38px;
    border-bottom: 2px solid #e2e8ea;
}

.window-icon {
    width: 46px;
    height: 46px;
    margin-right: 20px;
}

.window-header h1 {
    font-size: 24px;
    color: #505960;
}

.window-tools {
    display: flex;
    gap: 36px;
    margin-left: auto;
}

.window-body {
    display: flex;
}

.sidebar {
    width: 480px;
    padding: 32px 0 32px 24px;
    border-right: 2px solid #e4e6e8;
}

.search-row {
    display: flex;
    gap: 12px;
    margin-right: 24px;
}

.home {
    display: flex;
    align-items: center;
    justify-content: center;
    width: 60px;
    height: 56px;
    border-radius: 6px;
    background-color: #e9eef4;
}

.search {
    flex: 1;
    min-width: 0;
    display: flex;
    align-items: center;
    gap: 16px;
    height: 56px;
    padding: 0 18px;
    border: 2px solid #d6e0e8;
    border-radius: 6px;
}

.search input {
    flex: 1;
    min-width: 0;
    outline: none;
}

.search input::placeholder {
    color: #a9aeb3;
}

.nav-list {
    position: relative;
    padding: 4px 24px 0 0;
}

.nav-group + .nav-group {
    margin-top: 16px;
    padding-top: 6px;
    border-top: 2px solid #e8ecef;
}

.nav-group h2 {
    display: flex;
    align-items: center;
    gap: 22px;
    height: 66px;
    padding-left: 34px;
    font-size: 24px;
    color: #9a9ea2;
}

.nav-group a {
    display: flex;
    align-items: center;
    gap: 14px;
    height: 84px;
    padding-left: 26px;
    border-radius: 8px;
    font-size: 28px;
    color: #3a434c;
}

.nav-group a svg {
    width: 40px;
    height: 40px;
}

.nav-group a.active {
    background-color: #e6f0fc;
}

.scrollbar {
    position: absolute;
    top: 16px;
    right: 4px;
    width: 16px;
    height: 828px;
    border-radius: 8px;
    background-color: #dedede;
}

.content {
    flex: 1;
    min-width: 0;
    padding: 16px 32px 50px;
}

.tabs {
    display: flex;
    gap: 48px;
    height: 75px;
    padding: 0 16px;
    border-bottom: 2px solid #d4dde6;
    font-size: 24px;
    font-weight: 700;
    line-height: 78px;
}

.tabs .active {
    position: relative;
    color: #0c72ee;
}

.tabs .active::after {
    content: "";
    position: absolute;
    left: 39px;
    bottom: -11px;
    width: 18px;
    height: 18px;
    border: 2px solid #d4dde6;
    border-width: 2px 0 0 2px;
    background: linear-gradient(135deg, #fff 50%, transparent 50%);
    transform: rotate(45deg);
}

.actions {
    display: flex;
    gap: 12px;
    padding: 23px 0 17px;
    border-bottom: 2px solid #d4dde6;
}

.actions button {
    display: flex;
    align-items: center;
    height: 56px;
    padding: 0 28px;
    border-radius: 4px;
    background-color: #e4e9ef;
    color: #36404a;
}

.actions button:disabled {
    color: #a4abb2;
}

.actions .menu::after {
    content: "";
    margin-left: 11px;
    margin-right: 5px;
    border: 6px solid transparent;
    border-top-color: #414b55;
    border-bottom-width: 0;
}

.iface {
    padding-bottom: 22px;
}

.iface.light {
    border-top: 2px solid #e4eaf0;
    background-color: #f4f9fe;
}

.iface.selected {
    border-top: 2px solid #dfe8f0;
    border-bottom: 2px solid #dfe8f0;
    padding-bottom: 0;
    background-color: #e6f0fc;
}

.iface-head {
    display: flex;
    align-items: center;
    height: 116px;
    padding: 0 44px 0 32px;
    line-height: 44px;
}

.iface-icon {
    width: 64px;
    height: 64px;
    margin-right: 36px;
}

.iface-name {
    width: 540px;
}

.iface-name h3 {
    font-size: 26px;
}

.iface-ip {
    flex: 1;
}

.iface-ip p {
    height: 44px;
}

.online {
    color: #0c72ee;
}

.offline {
    color: #a0a8b0;
}

.mosaic {
    width: 600px;
}

.shift {
    margin: 12px;
}

.toggle {
    color: #a2a8ad;
}

.selected .toggle {
    color: #0c72ee;
}

.iface table {
    width: calc(100% - 128px);
    margin: 15px 0 0 128px;
    border: 2px solid #96989f;
    border-radius: 8px;
    border-spacing: 0;
    overflow: hidden;
}

.iface th {
    height: 46px;
    padding: 0 14px 10px;
    background-color: #96989f;
    color: #fff;
    font-weight: 400;
    line-height: 36px;
    text-align: left;
}

.iface th:first-child {
    width: 486px;
}

.iface td {
    height: 64px;
    padding: 0 16px;
}

.iface td + td {
    padding-left: 14px;
}

.iface dl {
    display: grid;
    grid-template-columns: 540px 1fr;
    padding: 6px 0 0 132px;
    line-height: 48px;
}

.iface dd .mosaic {
    margin: 8px 0 20px;
}

.iface dd.low .mosaic {
    margin: 18px 0 10px;
}

/* Floating extension buttons */
.float-ball {
    position: absolute;
    right: 45px;
    bottom: 95px;
    width: 74px;
    height: 74px;
    display: flex;
    align-items: center;
    justify-content: center;
    border-radius: 50%;
    background: radial-gradient(circle, #c8ecff, #fff 70%);
    color: #1034f0;
}

.float-ball svg {
    width: 40px;
    height: 40px;
}

.float-translate {
    position: absolute;
    right: 0;
    bottom: 61px;
    width: 71px;
    height: 73px;
    padding-left: 24px;
    border-radius: 36px 0 0 36px;
    background-color: rgba(236, 66, 128, 0.5);
}

.float-translate svg {
    width: 36px;
    height: 36px;
    fill: #a8989e;
}
```
